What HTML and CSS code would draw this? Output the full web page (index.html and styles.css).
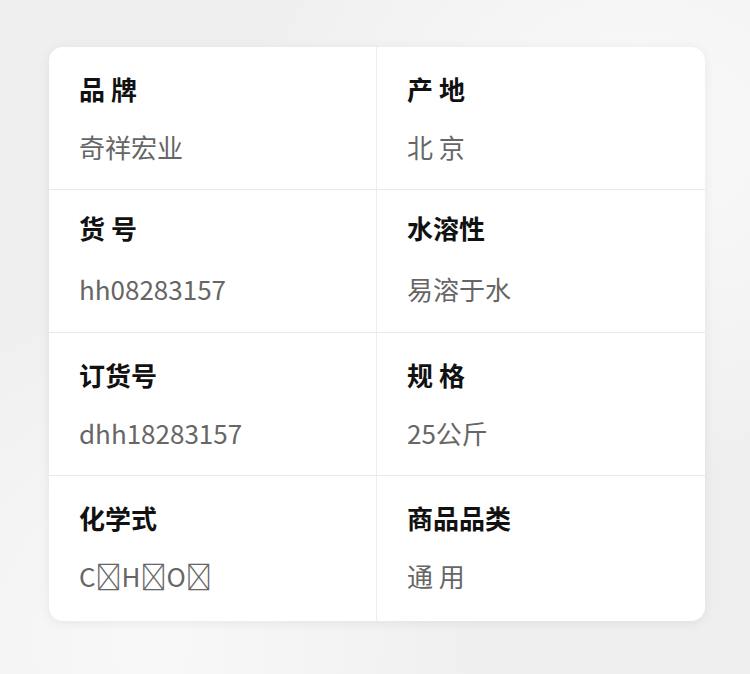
FILE: index.html
```html
<!DOCTYPE html>
<html lang="zh-CN">
<head>
<meta charset="utf-8">
<title>商品参数</title>
<link rel="stylesheet" href="styles.css">
</head>
<body>
<div class="page">
  <div class="spec-card">
    <div class="cell">
      <div class="label">品 牌</div>
      <div class="value">奇祥宏业</div>
    </div>
    <div class="cell">
      <div class="label">产 地</div>
      <div class="value">北 京</div>
    </div>
    <div class="cell cell-tall">
      <div class="label">货 号</div>
      <div class="value">hh08283157</div>
    </div>
    <div class="cell cell-tall">
      <div class="label">水溶性</div>
      <div class="value">易溶于水</div>
    </div>
    <div class="cell">
      <div class="label">订货号</div>
      <div class="value">dhh18283157</div>
    </div>
    <div class="cell">
      <div class="label">规 格</div>
      <div class="value">25公斤</div>
    </div>
    <div class="cell">
      <div class="label">化学式</div>
      <div class="value">C&#xE000;H&#xE000;O&#xE000;</div>
    </div>
    <div class="cell">
      <div class="label">商品品类</div>
      <div class="value">通 用</div>
    </div>
  </div>
</div>
</body>
</html>
```
FILE: styles.css
```css
html, body {
	margin: 0;
}
body {
	width: 750px;
	height: 674px;
	overflow: hidden;
	font-family: "Noto Sans CJK SC", "Noto Sans", sans-serif;
	background: radial-gradient(ellipse at 85% 20%, #fafafa 0%, rgba(250,250,250,0) 45%),
		radial-gradient(ellipse at 20% 95%, #f9f9f9 0%, rgba(249,249,249,0) 40%),
		#efefef;
}

.page {
	padding: 47px 45px 0 49px;
}

.spec-card {
	width: 656px;
	display: grid;
	grid-template-columns: 1fr 1fr;
	background: #fff;
	border-radius: 14px;
	box-shadow: 0 2px 12px rgba(0, 0, 0, 0.07);
	overflow: hidden;
}

.cell {
	height: 143px;
	box-sizing: border-box;
	padding: 24px 30px 0 30px;
	border-bottom: 1px solid #e9e9e9;
}
.cell:nth-child(odd) {
	border-right: 1px solid #ededed;
}
.cell:nth-child(n+7) {
	border-bottom: none;
	height: 145px;
}
/* second row sits its label a bit higher */
.cell-tall {
	padding-top: 20px;
}
.cell-tall .value {
	margin-top: 25px;
}

.label {
	font-size: 26px;
	line-height: 36px;
	font-weight: 700;
	color: #111;
}
.value {
	margin-top: 22px;
	font-size: 26px;
	line-height: 36px;
	color: #666;
}
```
